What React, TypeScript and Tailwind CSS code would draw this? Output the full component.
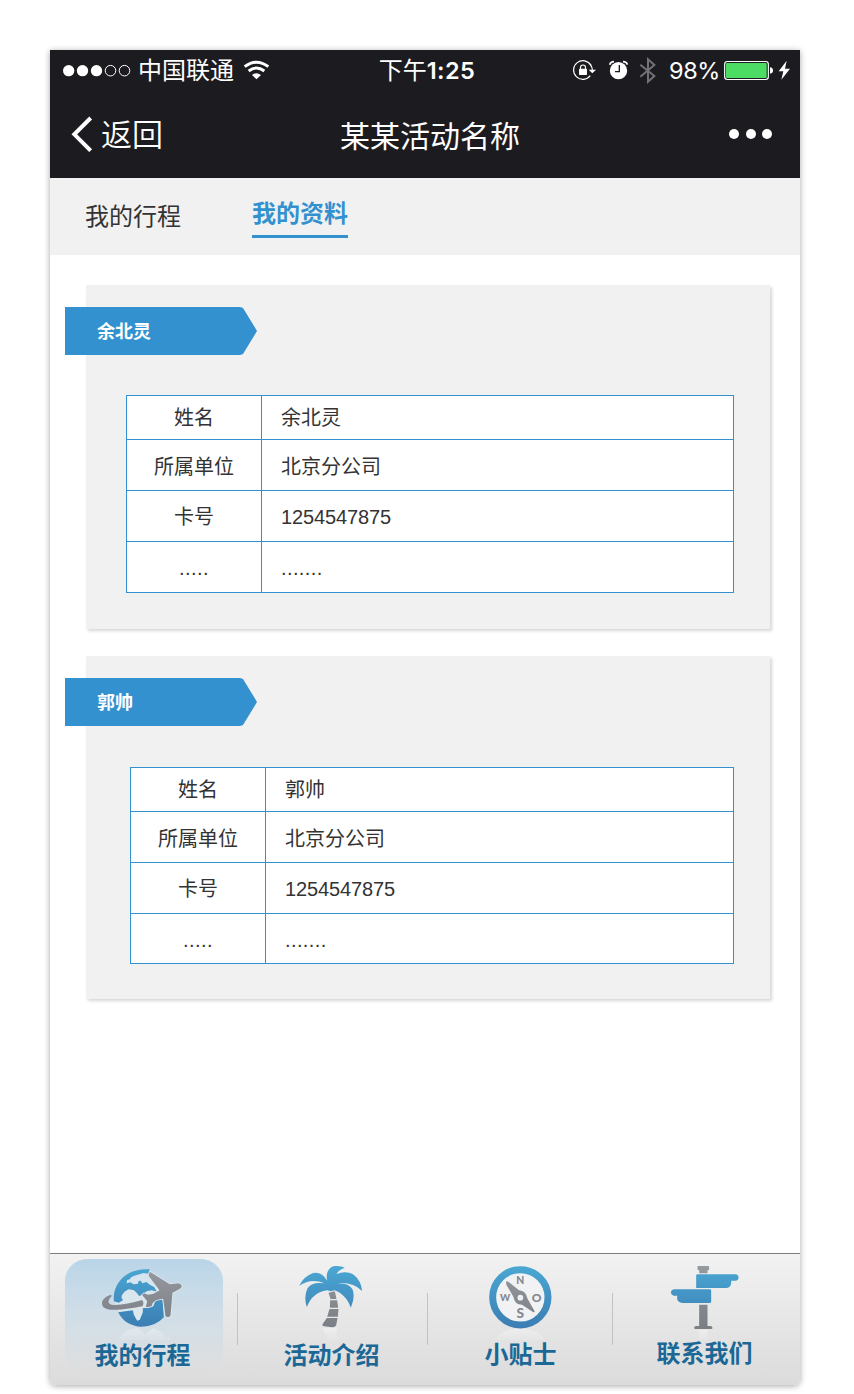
import React from "react";

function StatusBar() {
  return (
    <div className="grid h-[42px] grid-cols-[1fr_auto_1fr] items-center text-[24px] leading-none">
      <div className="flex items-center pl-3">
        <svg className="h-6 w-[70px]" viewBox="66 54 210 72" fill="#fff">
          <circle cx="86" cy="89" r="17" />
          <circle cx="127.500" cy="89" r="17" />
          <circle cx="169.500" cy="89" r="17" />
          <g fill="none" stroke="#fff" strokeWidth="3">
            <circle cx="211.500" cy="89" r="15.800" />
            <circle cx="253.500" cy="89" r="15.800" />
          </g>
        </svg>
        <span className="ml-[6px]">中国联通</span>
        <svg className="ml-[9px] h-6 w-[27px]" viewBox="609 54 81 72" fill="none" stroke="#fff" strokeWidth="9">
          <path d="M614 77Q649 50 685 77" />
          <path d="M626 90Q649 72 673 90" />
          <path d="M636 102Q649 92 663 102L649.500 115Z" fill="#fff" stroke="none" />
        </svg>
      </div>
      <div className="flex items-center pl-1">
        <span>下午</span>
        <span className="text-[23.500px] font-semibold tracking-[0.4px]">1:25</span>
      </div>
      <div className="flex items-center justify-end pr-[9px]">
        <svg className="h-6 w-[25px]" viewBox="66 57 75 72" fill="none" stroke="#fff">
          <path d="M123 76A28 28 0 1 0 121 107" strokeWidth="3.500" />
          <path d="M121 73Q127 82 127 90" strokeWidth="3.500" />
          <path d="M116 89H138L127 100Z" fill="#fff" stroke="none" />
          <rect x="87" y="86" width="24" height="19" rx="2" fill="#fff" stroke="none" />
          <path d="M91.500 88V82Q91.500 75 99 75T106.500 82V88" strokeWidth="3.500" />
        </svg>
        <svg className="ml-[11px] h-6 w-[21px]" viewBox="174 57 63 72" fill="none">
          <circle cx="205.500" cy="92" r="26" fill="#fff" />
          <path d="M179 74Q182 65 192 65M219 65Q230 65 232 74" stroke="#fff" strokeWidth="5" />
          <path d="M208 75V95H195" stroke="#1c1b20" strokeWidth="4" />
        </svg>
        <svg className="ml-[9px] h-7 w-[19px]" viewBox="264 51 57 84" fill="none" stroke="#737276" strokeWidth="6">
          <path d="M271 74L313 108L294 125V58L313 75L271 110" />
        </svg>
        <span className="ml-[12px] w-[48px] text-[23.500px] tracking-[-0.4px]">98%</span>
        <svg className="ml-[6px] h-6 w-[51px]" viewBox="519 57 153 72">
          <rect x="524" y="64.500" width="131" height="54" rx="8" fill="#1c1b20" stroke="#fff" strokeWidth="3.500" />
          <rect x="528" y="69" width="122" height="45" rx="3" fill="#4cdb63" />
          <path d="M660 82Q669 83 669 91.500T660 101Z" fill="#fff" />
        </svg>
        <svg className="ml-1 h-6 w-[13px]" viewBox="684 57 39 72" fill="#fff">
          <path d="M710 62L686 94H700L694 119L720 86H705Z" />
        </svg>
      </div>
    </div>
  );
}

function TitleBar() {
  return (
    <div className="grid h-[86px] grid-cols-[1fr_auto_1fr] items-center pb-[2px] text-[30px] leading-none">
      <div className="flex items-center pl-5">
        <svg className="h-9 w-6" viewBox="90 229 72 108" fill="none" stroke="#fff" strokeWidth="12">
          <path d="M152 235L103 284L152 333" />
        </svg>
        <span className="ml-[7px] text-[31px] font-[350]">返回</span>
      </div>
      <span className="pt-[4px] pl-[10px]">某某活动名称</span>
      <div className="flex justify-end gap-[6.500px] pr-[28px]">
        <i className="size-[10px] rounded-full bg-white" />
        <i className="size-[10px] rounded-full bg-white" />
        <i className="size-[10px] rounded-full bg-white" />
      </div>
    </div>
  );
}

function Card({ name, narrow }: { name: string; narrow?: boolean }) {
  const rows = [
    ["姓名", name, "h-[43px] pt-px"],
    ["所属单位", "北京分公司", "h-[51px] border-t pt-[3px]"],
    ["卡号", "1254547875", "h-[51px] border-t pt-[2px]"],
    [".....", ".......", narrow ? "h-[50px] border-t pt-[3px] tracking-[0.4px]" : "h-[51px] border-t pt-[2px] tracking-[0.4px]"],
  ];
  return (
    <section
      className={`ml-[36px] w-[684px] bg-[#f1f1f1] pt-[22px] shadow-[2px_2px_3px_rgba(0,0,0,0.16)] ${
        narrow ? "mt-[27px] h-[343px]" : "mt-[30px] h-[344px]"
      }`}
    >
      <h2 className="-ml-[21px] flex h-12 w-48 items-center bg-[#3391cf] pt-[2px] pl-8 text-[18px] font-bold text-white [clip-path:polygon(0_0,175px_0,178px_1px,192px_24px,178px_47px,175px_48px,0_48px)]">
        {name}
      </h2>
      <div
        className={`border border-[#3391cf] bg-white text-[20px] text-[#333] ${
          narrow ? "ml-11 mt-[41px] w-[604px]" : "ml-10 mt-10 w-[608px]"
        }`}
      >
        {rows.map(([label, value, cls], i) => (
          <div key={label} className={`relative flex border-[#3391cf] leading-none ${cls}`}>
            <div className="flex w-[134px] items-center justify-center">{label}</div>
            <i className="absolute inset-y-0 left-[134px] w-px bg-[#3391cf]" />
            <div className={`flex items-center pl-[20px] ${i === 2 ? "tracking-[-0.12px]" : ""}`}>{value}</div>
          </div>
        ))}
      </div>
    </section>
  );
}

function Gradients({ id }: { id: string }) {
  return (
    <defs>
      <linearGradient id={`${id}-blue`} gradientUnits="userSpaceOnUse" x1="0" y1="80" x2="0" y2="265">
        <stop stopColor="#4aa7d2" />
        <stop offset="1" stopColor="#3c7db3" />
      </linearGradient>
      <linearGradient id={`${id}-gray`} gradientUnits="userSpaceOnUse" x1="0" y1="80" x2="0" y2="265">
        <stop stopColor="#96999f" />
        <stop offset="1" stopColor="#7a7e85" />
      </linearGradient>
      <linearGradient id={`${id}-fade`} gradientUnits="userSpaceOnUse" x1="0" y1="265" x2="0" y2="310">
        <stop stopColor="#fff" stopOpacity="0.35" />
        <stop offset="1" stopColor="#fff" stopOpacity="0" />
      </linearGradient>
    </defs>
  );
}

function GlobeIcon() {
  return (
    <svg className="h-[74px] w-[84px]" viewBox="154.5 78 252 222">
      <Gradients id="globe" />
      <path d="M203 300Q215 269 263 264L283 282L308 265Q342 276 348 300ZM349 290H359V300H349Z" fill="url(#globe-fade)" />
      <circle cx="271" cy="174" r="78" fill="#eef3f6" opacity=".45" />
      <path
        d="M190 184C186 122 237 82 298 88L293 101L279 99L262 104L252 107L242 112L238 118L230 120L228 130L240 127L249 133L262 131L265 122L272 123L275 130L288 126L299 135L311 141L319 155L304 151L290 153L282 158L276 164L266 168L257 157L249 150L234 148L222 155L214 166L213 174L218 180L205 188Z"
        fill="url(#globe-blue)"
      />
      <path
        d="M203 217L247 211L250 224L260 242L268 239L277 217L277 205L290 203L309 198L315 181L336 178L340 232Q314 261 270 260Q223 257 203 217Z"
        fill="url(#globe-blue)"
      />
      <path
        d="M181 164C148 174 147 202 170 207C192 214 244 205 276 199Q282 188 275 180Q229 193 193 195C169 194 170 183 184 168Z"
        fill="url(#globe-gray)"
      />
      <path
        d="M298 95L358 133L383 130Q392 131 394 138Q393 145 386 148L366 158L360 226Q359 231 352 232L345 229L338 176L317 180L306 190L304 198L291 202L286 200L290 184L275 165L280 160L293 164L309 161L327 151L294 107Z"
        fill="url(#globe-gray)"
        stroke="#dce8f0"
        strokeWidth="5"
        paintOrder="stroke"
      />
    </svg>
  );
}

function PalmIcon() {
  return (
    <svg className="h-[74px] w-[84px]" viewBox="182.500 78 252 222">
      <Gradients id="palm" />
      <path d="M278 264H321L318 284H285ZM292 286H325V300H292Z" fill="url(#palm-fade)" />
      <path
        d="M291 122C285 94 300 76 321 78Q335 79 344 83Q327 88 319 102Q351 90 374 107Q392 121 396 153Q368 125 320 130Q356 128 367 148Q376 171 362 203C352 174 333 158 313 151Q303 156 291 151Q247 157 230 201Q220 171 232 145Q246 124 283 130Q243 113 207 137Q222 108 249 99Q275 94 291 122Z"
        fill="url(#palm-blue)"
      />
      <g fill="url(#palm-gray)">
        <path d="M295 158L314 154L319 177H301Z" />
        <path d="M300 181H321L324 203H299Z" />
        <path d="M298 207H325L323 230H291Z" />
        <path d="M290 234H322L318 256Q315 262 306 262L282 259Q274 257 278 251Z" />
      </g>
    </svg>
  );
}

function CompassIcon() {
  return (
    <svg className="h-[74px] w-[84px]" viewBox="174 78 252 222">
      <Gradients id="compass" />
      <path d="M223 300Q243 265 301 267Q354 265 378 300Z" fill="url(#compass-fade)" />
      <circle cx="301" cy="172" r="83" fill="#f1f2f4" stroke="url(#compass-blue)" strokeWidth="21" />
      <path
        d="M258 125Q262 122 270 129L297 151Q318 153 322 175L343 212Q346 217 340 217L306 194Q284 194 280 170L259 134Z"
        fill="url(#compass-gray)"
      />
      <circle cx="301" cy="173" r="8.500" fill="#eef0f2" />
      <g fill="#858990" textAnchor="middle" className="font-['Lato',sans-serif] font-black">
        <text x="301" y="132" fontSize="31">N</text>
        <text x="255" y="183" fontSize="29">W</text>
        <text x="350" y="185" fontSize="36">O</text>
        <text x="301" y="233" fontSize="41">S</text>
      </g>
    </svg>
  );
}

function SignIcon() {
  return (
    <svg className="h-[74px] w-[84px]" viewBox="164.500 78 252 222">
      <Gradients id="sign" />
      <path d="M253 269H306L292 273V300H267V273Z" fill="url(#sign-fade)" />
      <path d="M265 78H294Q297 78 297 82V88Q297 91 292 91V100H267V91Q262 91 262 88V81Q262 78 265 78Z" fill="url(#sign-gray)" />
      <path d="M267 194H292V258H302Q307 260 307 264Q307 267 302 267H256Q252 267 252 263Q252 259 258 258H267Z" fill="url(#sign-gray)" />
      <path d="M260 103H377Q386 105 385 113Q385 121 376 122H363V130Q361 143 350 144H258V106Z" fill="url(#sign-blue)" />
      <path d="M191 148H301L303 151V186L300 189H217Q203 188 201 177V167H190Q182 165 182 157Q183 149 191 148Z" fill="url(#sign-blue)" />
    </svg>
  );
}

function BottomNav() {
  const label = "text-[24px] leading-[24px] font-bold text-[#1b6897]";
  return (
    <nav className="flex h-[132px] rounded-b-[6px] border-t border-[#7d7d7d] bg-linear-to-b from-[#f2f2f2] to-[#dbdbdb]">
      <div className="flex w-[187px] justify-center pt-[5px]">
        <div className="flex h-[114px] w-[158px] flex-col items-center rounded-[22px] bg-linear-to-b from-[#b9d4e7] to-[#b9d4e700] pt-[7px]">
          <GlobeIcon />
          <span className={label + " mt-1 pr-[2px]"}>我的行程</span>
        </div>
      </div>
      <i className="mt-[39px] h-[52px] w-px bg-[#c2c2c2]" />
      <div className="flex w-[189px] flex-col items-center pt-3">
        <PalmIcon />
        <span className={label + " mt-1 pr-[2px]"}>活动介绍</span>
      </div>
      <i className="mt-[39px] h-[52px] w-px bg-[#c2c2c2]" />
      <div className="flex w-[184px] flex-col items-center pt-3">
        <CompassIcon />
        <span className={label + " mt-[3px] pl-px"}>小贴士</span>
      </div>
      <i className="mt-[39px] h-[52px] w-px bg-[#c2c2c2]" />
      <div className="flex w-[187px] flex-col items-center pt-3">
        <SignIcon />
        <span className={label + " mt-[2px] pr-1"}>联系我们</span>
      </div>
    </nav>
  );
}

export default function App() {
  return (
    <div className="min-h-[1394px] bg-white pt-[50px] pl-[50px] font-['Liberation_Sans','Noto_Sans_CJK_SC',sans-serif]">
      <main className="flex h-[1335px] w-[750px] flex-col rounded-b-[6px] bg-white shadow-[0_1px_6px_rgba(0,0,0,0.35)]">
        <header className="h-32 bg-[#1c1b20] font-['Inter','Noto_Sans_CJK_SC',sans-serif] text-white">
          <StatusBar />
          <TitleBar />
        </header>
        <div className="flex h-[77px] items-start gap-[71px] bg-[#f1f1f1] pl-[35px] text-[24px] leading-[24px]">
          <span className="mt-[27px] text-[#333]">我的行程</span>
          <span className="mt-6 h-9 border-b-[3px] border-[#3391cf] font-bold text-[#3391cf]">我的资料</span>
        </div>
        <div className="flex-1">
          <Card name="余北灵" />
          <Card name="郭帅" narrow />
        </div>
        <BottomNav />
      </main>
    </div>
  );
}
